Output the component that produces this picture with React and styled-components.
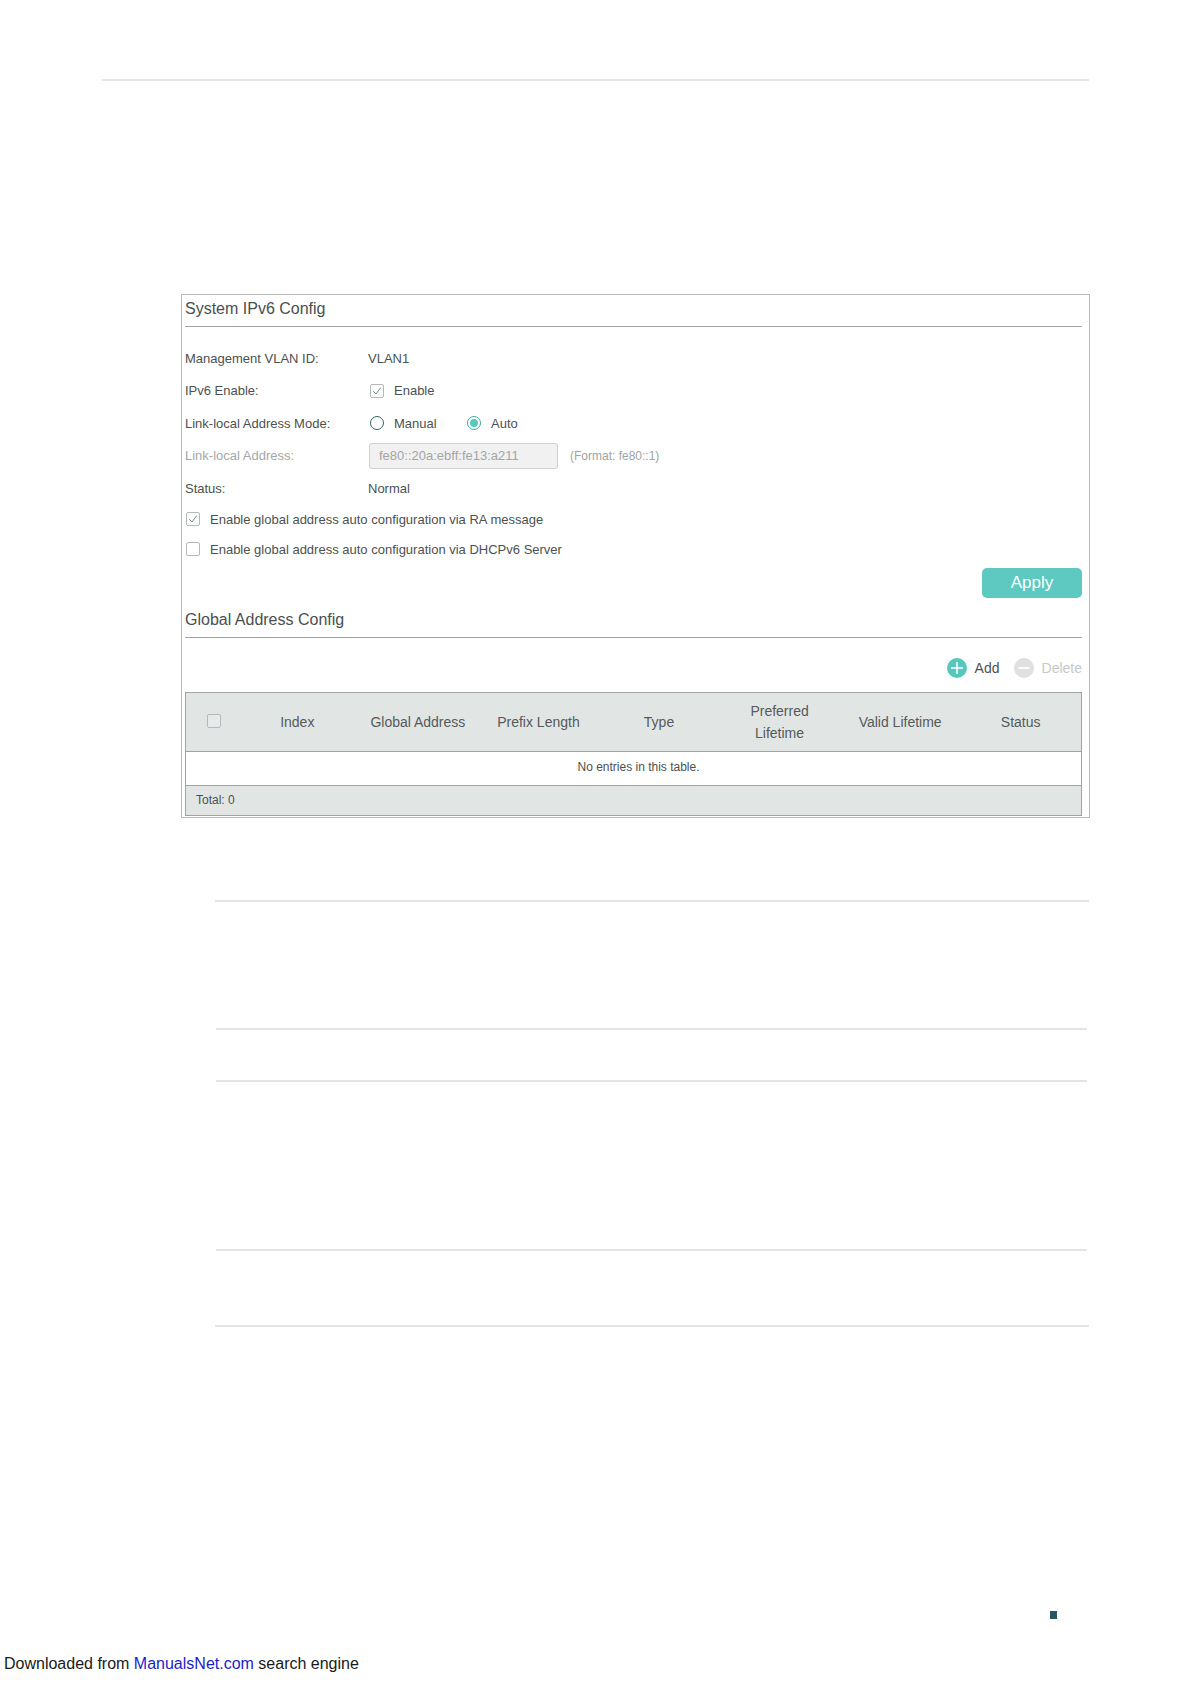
import React from "react";
import styled, { createGlobalStyle } from "styled-components";

const Global = createGlobalStyle`
  html, body { margin: 0; padding: 0; background: #fff; }
  body { font-family: "Liberation Sans", Arial, sans-serif; color: #4c5150; }
`;

const Page = styled.div`
  width: 1191px;
  height: 1684px;
  display: flex;
  flex-direction: column;
  overflow: hidden;
  position: relative;
`;

const Rule = styled.div`
  height: 2px;
  background: #e4e4e4;
  margin: ${p => p.$top}px ${p => p.$right}px 0 ${p => p.$left}px;
`;

const Panel = styled.section`
  margin: 213px 101px 0 181px;
  height: 524px;
  box-sizing: border-box;
  border: 1px solid #b9b9b9;
  padding: 0 7px 0 3px;
  display: flex;
  flex-direction: column;
`;

const SectionHead = styled.h2`
  margin: 0;
  height: ${p => p.$h}px;
  line-height: ${p => p.$line}px;
  font-size: 16px;
  font-weight: 400;
  color: #4a4f4f;
  border-bottom: 1px solid #a3a3a3;
  box-sizing: border-box;
`;

const Form = styled.div`
  display: flex;
  flex-direction: column;
  margin-top: 15px;
`;

const Row = styled.div`
  display: grid;
  grid-template-columns: 183px 1fr;
  align-items: center;
  height: ${p => p.$h || 32.5}px;
  font-size: 13px;
  color: ${p => (p.$muted ? "#a4a8a8" : "#4c5150")};
`;

const Value = styled.div`
  display: flex;
  align-items: center;
`;

const Check = styled.span`
  width: 14px;
  height: 14px;
  box-sizing: border-box;
  flex: none;
  border: 1px solid #b5b9b9;
  border-radius: 2px;
  background: ${p => p.$bg || "#fff"};
  display: flex;
  align-items: center;
  justify-content: center;
  margin: ${p => p.$margin || "0 10px 0 1px"};
`;

const Radio = styled.span`
  width: 14px;
  height: 14px;
  box-sizing: border-box;
  flex: none;
  border-radius: 50%;
  border: 1.3px solid ${p => (p.$on ? "#3fa9a0" : "#35635f")};
  display: flex;
  align-items: center;
  justify-content: center;
  margin: 0 10px 0 ${p => p.$left || 1}px;
  &::after {
    content: "";
    display: ${p => (p.$on ? "block" : "none")};
    width: 8px;
    height: 8px;
    border-radius: 50%;
    background: #5cc8bd;
  }
`;

const RadioLabel = styled.span`
  width: 72px;
`;

const AddressInput = styled.div`
  width: 189px;
  height: 26px;
  box-sizing: border-box;
  border: 1px solid #cfd2d2;
  border-radius: 3px;
  background: #f1f1f1;
  color: #a3a6a6;
  padding-left: 9px;
  line-height: 24px;
  margin-left: 1px;
  margin-right: 12px;
`;

const Hint = styled.span`
  font-size: 12px;
  color: #a0a4a4;
`;

const CheckRow = styled.div`
  display: flex;
  align-items: center;
  height: ${p => p.$h}px;
  margin-top: ${p => p.$top || 0}px;
  font-size: 13px;
  color: #4c5150;
`;

const ApplyBar = styled.div`
  display: flex;
  justify-content: flex-end;
  margin-top: 3.5px;
`;

const Apply = styled.button`
  width: 100px;
  height: 30px;
  border: 0;
  border-radius: 5px;
  background: #5dc9c1;
  color: #fff;
  font: 400 17px "Liberation Sans", Arial, sans-serif;
  padding: 1px 0 0;
`;

const Toolbar = styled.div`
  display: flex;
  justify-content: flex-end;
  align-items: center;
  height: 20px;
  margin-top: 20px;
  margin-bottom: 14px;
  font-size: 14px;
`;

const ToolIcon = styled.svg`
  width: 20px;
  height: 20px;
  margin-right: 8px;
  margin-left: ${p => p.$left || 0}px;
`;

const ToolLabel = styled.span`
  color: ${p => (p.$off ? "#c6c9c9" : "#4c5150")};
`;

const Table = styled.div`
  border: 1px solid #a3a3a3;
  box-sizing: border-box;
  height: 124px;
  display: grid;
  grid-template-rows: 58px 1px 33px 1px 1fr;
  background: #fff;
`;

const HeadRow = styled.div`
  display: grid;
  grid-template-columns: 51px repeat(7, 1fr);
  background: #e1e6e5;
  align-items: center;
  text-align: center;
  font-size: 14px;
  line-height: 22px;
  color: #555a5a;
`;

const HeadCheck = styled.div`
  display: flex;
  justify-content: center;
  margin: -1px 0 0 4px;
`;

const Line = styled.div`
  background: #a3a3a3;
`;

const Empty = styled.div`
  text-align: center;
  line-height: 31px;
  font-size: 12px;
  color: #4c5150;
  padding-left: 10px;
`;

const Total = styled.div`
  background: #e1e6e5;
  font-size: 12px;
  line-height: 29px;
  padding-left: 10px;
  color: #4c5150;
`;

const MarkRow = styled.div`
  display: flex;
  justify-content: flex-end;
  margin: 284px 134px 0 0;
`;

const Mark = styled.div`
  width: 7px;
  height: 8px;
  background: #2c5563;
`;

const Footer = styled.div`
  margin: 35px 0 0 4px;
  font-size: 16px;
  line-height: 20px;
  color: #1a1a1a;
`;

const FooterLink = styled.span`
  color: #1c1ccc;
`;

const Tick = () => (
  <svg width="10" height="10" viewBox="0 0 10 10" fill="none" stroke="#6f8f8b" strokeWidth="1">
    <path d="M1.2 5.2 L4 8 L8.8 1.6" />
  </svg>
);

const heads = ["Index", "Global Address", "Prefix Length", "Type", "Preferred Lifetime", "Valid Lifetime", "Status"];

export default function App() {
  return (
    <Page>
      <Global />
      <Rule $top={79} $left={102} $right={102} />
      <Panel>
        <SectionHead $h={32} $line={27}>System IPv6 Config</SectionHead>
        <Form>
          <Row>
            <span>Management VLAN ID:</span>
            <Value>VLAN1</Value>
          </Row>
          <Row>
            <span>IPv6 Enable:</span>
            <Value><Check $margin="0 10px 0 2px"><Tick /></Check>Enable</Value>
          </Row>
          <Row>
            <span>Link-local Address Mode:</span>
            <Value>
              <Radio $left={2} />
              <RadioLabel>Manual</RadioLabel>
              <Radio $on $left={1} />
              <span>Auto</span>
            </Value>
          </Row>
          <Row $muted>
            <span>Link-local Address:</span>
            <Value>
              <AddressInput>fe80::20a:ebff:fe13:a211</AddressInput>
              <Hint>(Format: fe80::1)</Hint>
            </Value>
          </Row>
          <Row>
            <span>Status:</span>
            <Value>Normal</Value>
          </Row>
          <CheckRow $h={30} $top={-0.5}><Check><Tick /></Check>Enable global address auto configuration via RA message</CheckRow>
          <CheckRow $h={30}><Check />Enable global address auto configuration via DHCPv6 Server</CheckRow>
        </Form>
        <ApplyBar><Apply>Apply</Apply></ApplyBar>
        <SectionHead $h={40} $line={44}>Global Address Config</SectionHead>
        <Toolbar>
          <ToolIcon viewBox="0 0 20 20">
            <circle cx="10" cy="10" r="10" fill="#57c6bd" />
            <path d="M10 4v12M4 10h12" stroke="#fff" strokeWidth="1.6" />
          </ToolIcon>
          <ToolLabel>Add</ToolLabel>
          <ToolIcon viewBox="0 0 20 20" $left={14}>
            <circle cx="10" cy="10" r="10" fill="#e0e0e0" />
            <path d="M4.5 10h11" stroke="#fff" strokeWidth="1.8" />
          </ToolIcon>
          <ToolLabel $off>Delete</ToolLabel>
        </Toolbar>
        <Table>
          <HeadRow>
            <HeadCheck><Check $margin="0" $bg="#e6eaea" /></HeadCheck>
            {heads.map(h => (
              <div key={h}>{h === "Preferred Lifetime" ? <>Preferred<br />Lifetime</> : h}</div>
            ))}
          </HeadRow>
          <Line />
          <Empty>No entries in this table.</Empty>
          <Line />
          <Total>Total: 0</Total>
        </Table>
      </Panel>
      <Rule $top={82} $left={215} $right={102} />
      <Rule $top={126} $left={216} $right={104} />
      <Rule $top={50} $left={216} $right={104} />
      <Rule $top={167} $left={216} $right={104} />
      <Rule $top={74} $left={215} $right={102} />
      <MarkRow><Mark /></MarkRow>
      <Footer>
        Downloaded from <FooterLink>ManualsNet.com</FooterLink> search engine
      </Footer>
    </Page>
  );
}
